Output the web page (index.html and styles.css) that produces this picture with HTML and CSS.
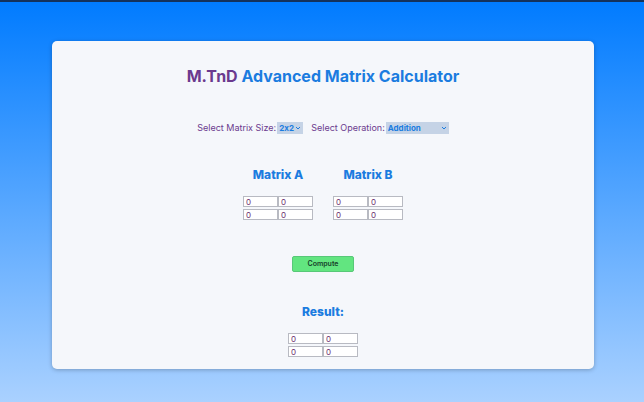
FILE: index.html
```html
<!DOCTYPE html>
<html lang="en">
<head>
<meta charset="utf-8">
<title>M.TnD Advanced Matrix Calculator</title>
<link rel="stylesheet" href="styles.css">
</head>
<body>
<main class="card">
  <h1><span class="brand">M.TnD</span> Advanced Matrix Calculator</h1>
  <div class="controls">
    <div class="field">
      <label for="size">Select Matrix Size:</label>
      <span class="picker picker-size">
        <select id="size"><option>2x2</option><option>3x3</option></select>
        <svg class="chevron" viewBox="0 0 6 4" aria-hidden="true"><path d="M1 1l2 2 2-2"/></svg>
      </span>
    </div>
    <div class="field">
      <label for="operation">Select Operation:</label>
      <span class="picker picker-operation">
        <select id="operation"><option>Addition</option><option>Subtraction</option><option>Multiplication</option></select>
        <svg class="chevron" viewBox="0 0 6 4" aria-hidden="true"><path d="M1 1l2 2 2-2"/></svg>
      </span>
    </div>
  </div>
  <div class="matrices">
    <section>
      <h2>Matrix A</h2>
      <div class="matrix">
        <input value="0" aria-label="A row 1 column 1"><input value="0" aria-label="A row 1 column 2">
        <input value="0" aria-label="A row 2 column 1"><input value="0" aria-label="A row 2 column 2">
      </div>
    </section>
    <section>
      <h2>Matrix B</h2>
      <div class="matrix">
        <input value="0" aria-label="B row 1 column 1"><input value="0" aria-label="B row 1 column 2">
        <input value="0" aria-label="B row 2 column 1"><input value="0" aria-label="B row 2 column 2">
      </div>
    </section>
  </div>
  <button class="compute" type="button">Compute</button>
  <section>
    <h2>Result:</h2>
    <div class="matrix">
      <input value="0" readonly aria-label="Result row 1 column 1"><input value="0" readonly aria-label="Result row 1 column 2">
      <input value="0" readonly aria-label="Result row 2 column 1"><input value="0" readonly aria-label="Result row 2 column 2">
    </div>
  </section>
</main>
</body>
</html>
```
FILE: styles.css
```css
* {
  box-sizing: border-box;
}

body {
  margin: 0;
  min-height: 100vh;
  padding: 39px 50px 32px 52px;
  border-top: 2px solid #14325c;
  background: linear-gradient(#007bff, #aad1ff);
  font-family: Inter, "Liberation Sans", sans-serif;
  font-size: 9px;
  color: #6b3a8e;
}

.card {
  display: flex;
  flex-direction: column;
  align-items: center;
  padding: 25px 12px 12px;
  border-radius: 5px;
  background: #f5f7fb;
  box-shadow: 0 1px 4px rgba(0, 0, 0, 0.25);
}

h1,
h2 {
  margin: 0;
  color: #1b7ce0;
  font-weight: 700;
  text-align: center;
}

h1 {
  font-size: 16px;
  line-height: 20px;
}

.brand {
  color: #6b3a8e;
}

h2 {
  margin-bottom: 13px;
  font-size: 12px;
  font-weight: 800;
  line-height: 16px;
}

.controls {
  display: flex;
  gap: 8px;
  margin: 36px 0 33px;
}

.field {
  display: flex;
  align-items: center;
  gap: 1px;
  line-height: 12px;
}

.picker {
  position: relative;
  height: 12px;
}

.picker-size {
  width: 26px;
}

.picker-operation {
  width: 63px;
}

select {
  display: block;
  width: 100%;
  height: 12px;
  padding: 0 0 0 2px;
  border: 0;
  appearance: none;
  background: #c5d3e6;
  color: #1b7ce0;
  font: 700 8px/12px Inter, "Liberation Sans", sans-serif;
  font-feature-settings: "calt" 0;
}

.chevron {
  position: absolute;
  top: 4px;
  right: 2px;
  width: 6px;
  height: 4px;
  fill: none;
  stroke: #1b7ce0;
  pointer-events: none;
}

.matrices {
  display: flex;
  gap: 20px;
}

.matrix {
  display: grid;
  grid-template-columns: 35px 35px;
  row-gap: 2px;
}

input {
  width: 100%;
  height: 11px;
  padding: 0 2px;
  border: 1px solid #b8bac2;
  border-radius: 0;
  background: #fff;
  color: #6b2f6e;
  font: 400 8px/9px Inter, "Liberation Sans", sans-serif;
}

.compute {
  width: 62px;
  height: 16px;
  margin: 36px 0 32px;
  padding: 0;
  border: 1px solid #58c878;
  border-radius: 2px;
  background: #62e580;
  color: #17402a;
  font: 600 7px/14px Inter, "Liberation Sans", sans-serif;
}
```
